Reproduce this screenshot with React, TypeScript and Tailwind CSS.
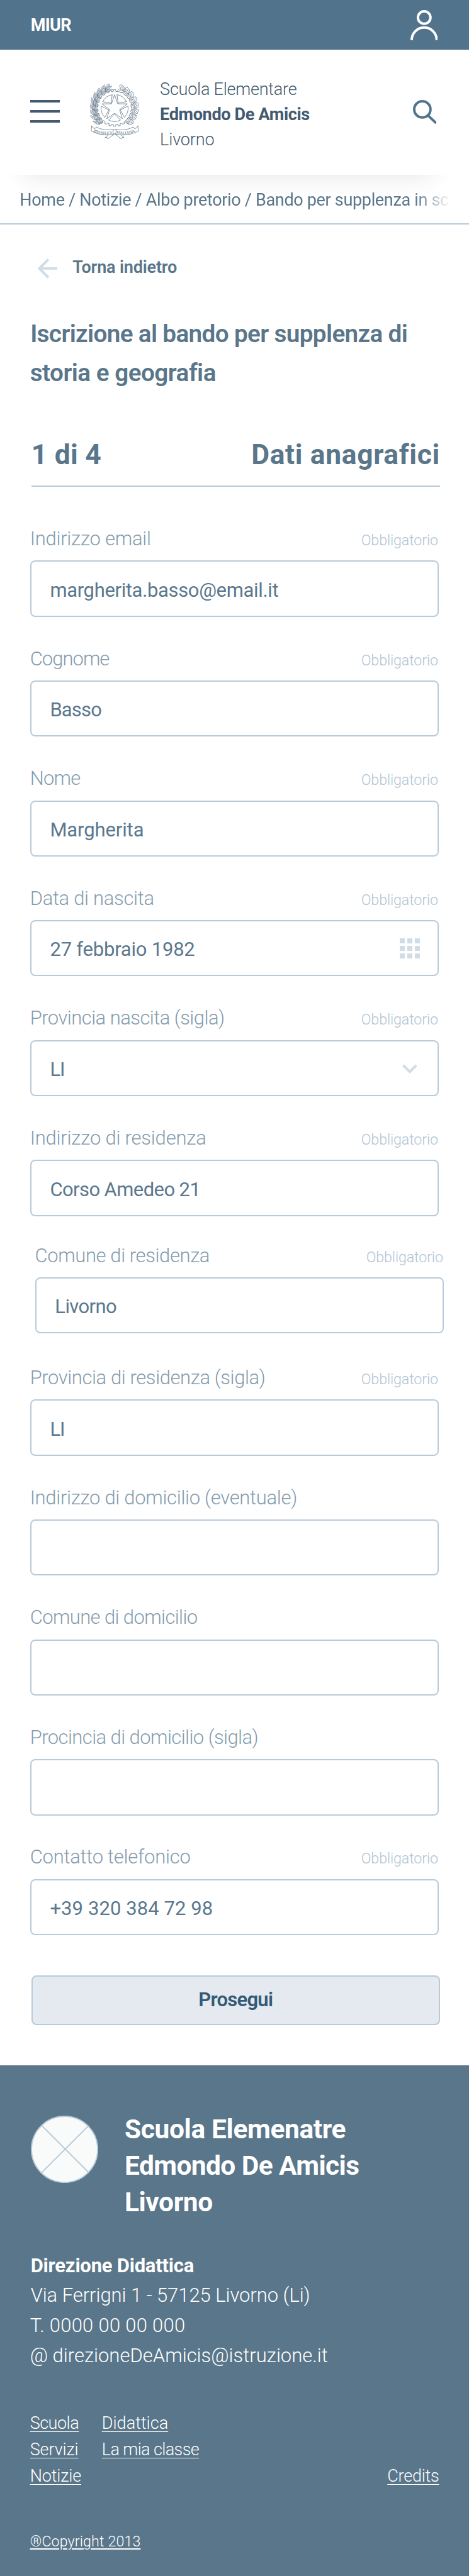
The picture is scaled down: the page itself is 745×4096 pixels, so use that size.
import type { ReactNode } from "react";

const rad = (deg: number) => (deg * Math.PI) / 180;
const CX = 160;
const CY = 159;
const polar = (r: number, deg: number) =>
  `${(CX + r * Math.cos(rad(deg))).toFixed(1)},${(CY + r * Math.sin(rad(deg))).toFixed(1)}`;

const star = Array.from({ length: 10 }, (_, i) => polar(i % 2 ? 25 : 64, -90 + i * 36)).join(" ");

const gear = Array.from({ length: 24 }, (_, i) => {
  const a = i * 15;
  return [polar(80, a - 4), polar(88, a - 3.5), polar(88, a + 3.5), polar(80, a + 4)].join(" ");
}).join(" ");

const wedges = [-54, 18, 90, 162, 234].map(
  (a) => `M${polar(29, a)} L${polar(65, a - 26)} A65,65 0 0 1 ${polar(65, a + 26)} Z`,
);

const LAUREL_LEAF = "M0,0 C7,-9 6,-26 0,-37 C-6,-26 -7,-9 0,0 Z M0,0 L0,-28";
const OAK_LEAF =
  "M0,0 C7,-1 9,-6 5,-9 C11,-11 11,-17 6,-19 C9,-24 6,-29 0,-31 C-6,-29 -9,-24 -6,-19 C-11,-17 -11,-11 -5,-9 C-9,-6 -7,-1 0,0 Z M0,0 L0,-24";

const branch = (steps: number, spread: number[]) =>
  Array.from({ length: steps }, (_, i) => 128 + (i * 112) / (steps - 1)).flatMap((a) =>
    spread.map((turn, k) => ({ at: polar(92 + k * 6, a + k * 2), turn: a + 180 + turn })),
  );

const laurel = branch(9, [16, 0, -16]);
const oak = branch(8, [18, -20]);

function Emblem() {
  return (
    <svg viewBox="42 42 240 270" className="h-[90px] w-20" fill="#fff" stroke="#435a70" strokeWidth="2" strokeLinejoin="round">
      <polygon points={gear} />
      <polygon points={star} />
      {wedges.map((d) => (
        <path key={d} d={d} />
      ))}
      <g strokeWidth="1.8">
        {laurel.map((l, i) => (
          <path key={i} d={LAUREL_LEAF} transform={`translate(${l.at}) rotate(${l.turn})`} />
        ))}
      </g>
      <g strokeWidth="1.8" transform="translate(320 0) scale(-1 1)">
        {oak.map((l, i) => (
          <path key={i} d={OAK_LEAF} transform={`translate(${l.at}) rotate(${l.turn})`} />
        ))}
      </g>
      <path d="M150,272 L114,302 L122,300 L128,308 L168,276 Z" />
      <path d="M170,272 L206,302 L198,300 L192,308 L152,276 Z" />
      <path d="M50,244 C54,252 60,258 66,258 L72,250 C92,262 126,268 154,262 L158,284 C126,292 92,290 62,276 L48,270 Z" />
      <path d="M272,244 C268,252 262,258 256,258 L250,250 C230,262 196,268 166,262 L162,284 C194,292 230,290 260,276 L274,270 Z" />
      <ellipse cx="160" cy="273" rx="8" ry="11" />
      <path id="ribbon-left" d="M57,272 C88,288 124,290 156,280" fill="none" stroke="none" />
      <path id="ribbon-right" d="M168,281 C198,289 234,286 266,270" fill="none" stroke="none" />
      <g className="font-['Liberation_Serif',serif]" fontSize="19" fill="#435a70" stroke="none">
        <text>
          <textPath href="#ribbon-left" textLength="94" lengthAdjust="spacingAndGlyphs">REPVBBLICA</textPath>
        </text>
        <text>
          <textPath href="#ribbon-right" textLength="92" lengthAdjust="spacingAndGlyphs">ITALIANA</textPath>
        </text>
      </g>
    </svg>
  );
}

function TopBar() {
  return (
    <div className="flex h-20 items-center justify-between bg-[#51748c] pr-[50px] pl-[49px]">
      <span className="mt-[3px] text-[27.25px] leading-10 font-bold tracking-[-0.6px] text-white">MIUR</span>
      <svg viewBox="0 0 44 48" className="h-12 w-11" fill="none" stroke="#fff" strokeWidth="4">
        <circle cx="22" cy="12" r="10" />
        <path d="M2 48 A20 20 0 0 1 42 48" />
      </svg>
    </div>
  );
}

function Header() {
  return (
    <header className="flex h-[200px] items-start bg-white pl-12 text-[#435a70]">
      <div className="mt-20 flex w-12 flex-col gap-3">
        <span className="h-1 bg-[#435a70]" />
        <span className="h-1 bg-[#435a70]" />
        <span className="h-1 bg-[#435a70]" />
      </div>
      <div className="mt-[54px] ml-12">
        <Emblem />
      </div>
      <div className="mt-[44.2px] ml-8 flex-1 text-[27.25px] leading-10 whitespace-nowrap">
        <p className="font-light tracking-[-0.25px]">Scuola Elementare</p>
        <p className="font-bold tracking-[-0.35px]">Edmondo De Amicis</p>
        <p className="font-light tracking-[-0.14px]">Livorno</p>
      </div>
      <svg viewBox="0 0 38 38" className="mt-20 mr-[52px] h-[38px] w-[38px]" fill="none" stroke="#51748c" strokeWidth="4" strokeLinecap="round">
        <circle cx="15" cy="15" r="13" />
        <path d="M24.5 25 L36 36" />
      </svg>
    </header>
  );
}

function Breadcrumb() {
  return (
    <nav className="relative h-20 border-b-[2.1px] border-[#b8cad9] text-[#5a768a]">
      <div className="absolute top-0 left-0 h-12 w-[718px] overflow-hidden">
        <div className="-mt-16 mr-[26px] ml-[38px] h-16 shadow-[0_0_40px_rgba(0,0,0,0.12)]" />
      </div>
      <div className="relative ml-[31.5px] w-[686px] overflow-hidden pt-[21px] [mask-image:linear-gradient(to_right,#000_632px,transparent_692px)]">
        <p className="text-[27.25px] leading-10 font-normal tracking-[-0.35px] whitespace-nowrap">
          Home / Notizie / Albo pretorio / Bando per supplenza in sc
        </p>
      </div>
    </nav>
  );
}

type FieldProps = {
  label: string;
  labelTracking: string;
  value?: string;
  valueTracking?: string;
  required?: boolean;
  icon?: ReactNode;
  className?: string;
};

function Field({ label, labelTracking, value, valueTracking = "", required, icon, className = "" }: FieldProps) {
  return (
    <div className={className}>
      <div className="mb-[14.7px] flex h-10 items-baseline justify-between pr-px leading-10 font-light">
        <label className={`text-[31.2px] whitespace-nowrap text-[#859cae] ${labelTracking}`}>{label}</label>
        {required && <span className="text-[23.4px] tracking-[-0.12px] text-[#b0c4d4]">Obbligatorio</span>}
      </div>
      <div className="flex h-[90px] items-center justify-between rounded-lg border-[2.1px] border-[#b8cad9] bg-white pr-[28px] pl-[30px]">
        <span className={`mt-[5px] text-[31.2px] leading-10 font-normal whitespace-nowrap text-[#5a788e] ${valueTracking}`}>
          {value}
        </span>
        {icon}
      </div>
    </div>
  );
}

function GridIcon() {
  return (
    <div className="grid grid-cols-3 gap-1">
      {Array.from({ length: 9 }, (_, i) => (
        <span key={i} className="size-2 bg-[#d0dce6]" />
      ))}
    </div>
  );
}

function ChevronIcon() {
  return (
    <svg viewBox="0 0 24 16" className="mt-[3px] mr-1 h-4 w-6" fill="none" stroke="#d0dce6" strokeWidth="4">
      <path d="M1.5 1.8 L12 12.3 L22.5 1.8" />
    </svg>
  );
}

const fields: FieldProps[] = [
  { label: "Indirizzo email", labelTracking: "tracking-[-0.24px]", value: "margherita.basso@email.it", valueTracking: "tracking-[-0.34px]", required: true },
  { label: "Cognome", labelTracking: "tracking-[-0.97px]", value: "Basso", valueTracking: "tracking-[-0.85px]", required: true },
  { label: "Nome", labelTracking: "tracking-[-0.76px]", value: "Margherita", valueTracking: "tracking-[-0.1px]", required: true },
  { label: "Data di nascita", labelTracking: "tracking-[-0.3px]", value: "27 febbraio 1982", valueTracking: "tracking-[-0.2px]", required: true, icon: <GridIcon /> },
  { label: "Provincia nascita (sigla)", labelTracking: "tracking-[-0.53px]", value: "LI", valueTracking: "tracking-[-1.2px]", required: true, icon: <ChevronIcon /> },
  { label: "Indirizzo di residenza", labelTracking: "tracking-[-0.19px]", value: "Corso Amedeo 21", valueTracking: "tracking-[-0.58px]", required: true },
  { label: "Comune di residenza", labelTracking: "tracking-[-0.4px]", value: "Livorno", valueTracking: "tracking-[-0.62px]", required: true, className: "-mt-1 -mr-2 mb-1 ml-2" },
  { label: "Provincia di residenza (sigla)", labelTracking: "tracking-[-0.4px]", value: "LI", valueTracking: "tracking-[-1.2px]", required: true },
  { label: "Indirizzo di domicilio (eventuale)", labelTracking: "tracking-[-0.29px]" },
  { label: "Comune di domicilio", labelTracking: "tracking-[-0.61px]" },
  { label: "Procincia di domicilio (sigla)", labelTracking: "tracking-[-0.57px]" },
  { label: "Contatto telefonico", labelTracking: "tracking-[-0.24px]", value: "+39 320 384 72 98", valueTracking: "tracking-[0.1px]", required: true },
];

function FormPage() {
  return (
    <main className="pr-12 pl-12 text-[#5a768a]">
      <div className="mt-[49px] flex h-10 items-center pl-3">
        <svg viewBox="0 0 32 32" className="mt-[2px] h-8 w-8" fill="none" stroke="#d0dce6" strokeWidth="4">
          <path d="M2 16 H32 M17 1.5 L2.5 16 L17 30.5" />
        </svg>
        <span className="ml-6 text-[27.25px] leading-10 font-semibold tracking-[-0.19px]">Torna indietro</span>
      </div>

      <h1 className="mt-[54.7px] text-[39px] leading-[62px] font-semibold whitespace-nowrap">
        <span className="block pl-[0.5px] tracking-[-0.65px]">Iscrizione al bando per supplenza di</span>
        <span className="block tracking-[-0.52px]">storia e geografia</span>
      </h1>

      <div className="mt-[71px] ml-0.5 flex h-[81.3px] w-[654px] justify-between border-b-[2.1px] border-[#b8cad9] text-[44.75px] leading-[60px] font-bold whitespace-nowrap">
        <span className="tracking-[0.25px]">1 di 4</span>
        <span className="tracking-[0.65px]">Dati anagrafici</span>
      </div>

      <form className="mt-[63.3px] flex w-[654px] flex-col gap-[47.3px]">
        {fields.map((f) => (
          <Field key={f.label} {...f} />
        ))}
      </form>

      <button className="mt-16 ml-0.5 block h-20 w-[654px] rounded-lg border-[2.1px] border-[#b8cad9] bg-[#e5e9f0] text-[31.2px] leading-10 font-semibold tracking-[-0.7px] text-[#335b76]">
        Prosegui
      </button>
    </main>
  );
}

const link = "underline decoration-1 underline-offset-[4px] [text-decoration-skip-ink:none]";

function Footer() {
  return (
    <footer className="mt-16 h-[818.5px] bg-[#5a768a] pr-12 pl-12 text-white">
      <div className="flex items-start pt-[74.4px]">
        <svg viewBox="0 0 108 108" className="mt-[6.6px] ml-px h-[108px] w-[108px]" stroke="#b8cad9" strokeWidth="2">
          <circle cx="54" cy="54" r="53" fill="#f9fafa" />
          <path d="M17.5 16 L92.5 91 M92.5 16 L17.5 91" />
        </svg>
        <div className="ml-[42.5px] text-[42.8px] leading-[58px] font-bold whitespace-nowrap">
          <p className="tracking-[-0.37px]">Scuola Elemenatre</p>
          <p className="tracking-[-0.6px]">Edmondo De Amicis</p>
          <p className="tracking-[-0.44px]">Livorno</p>
        </div>
      </div>

      <address className="mt-[48.9px] text-[31.2px] leading-[48px] font-light whitespace-nowrap not-italic">
        <p className="pl-px font-bold tracking-[-0.22px]">Direzione Didattica</p>
        <p className="pl-px tracking-[-0.04px]">Via Ferrigni 1 - 57125 Livorno (Li)</p>
        <p className="tracking-[0.3px]">T. 0000 00 00 000</p>
        <p className="tracking-[0.02px]">@ direzioneDeAmicis@istruzione.it</p>
      </address>

      <div className="mt-[64.4px] flex items-end text-[27.25px] leading-[42px] font-light whitespace-nowrap">
        <ul className="w-[115px]">
          <li><a className={`tracking-[-0.51px] ${link}`}>Scuola</a></li>
          <li><a className={`tracking-[-0.11px] ${link}`}>Servizi</a></li>
          <li><a className={`tracking-[-0.15px] ${link}`}>Notizie</a></li>
        </ul>
        <ul className="flex-1 self-start">
          <li><a className={`tracking-[0.01px] ${link}`}>Didattica</a></li>
          <li><a className={`tracking-[-0.63px] ${link}`}>La mia classe</a></li>
        </ul>
        <a className={`tracking-[-0.26px] ${link}`}>Credits</a>
      </div>

      <p className="mt-[69.3px] text-[23.4px] leading-[30px] font-light tracking-[0.13px] underline decoration-2 underline-offset-[3px]">
        ®Copyright 2013
      </p>
    </footer>
  );
}

export default function App() {
  return (
    <div className="w-[750.5px] overflow-hidden bg-white font-['Roboto',sans-serif] [zoom:0.99275]">
      <TopBar />
      <Header />
      <Breadcrumb />
      <FormPage />
      <Footer />
    </div>
  );
}
